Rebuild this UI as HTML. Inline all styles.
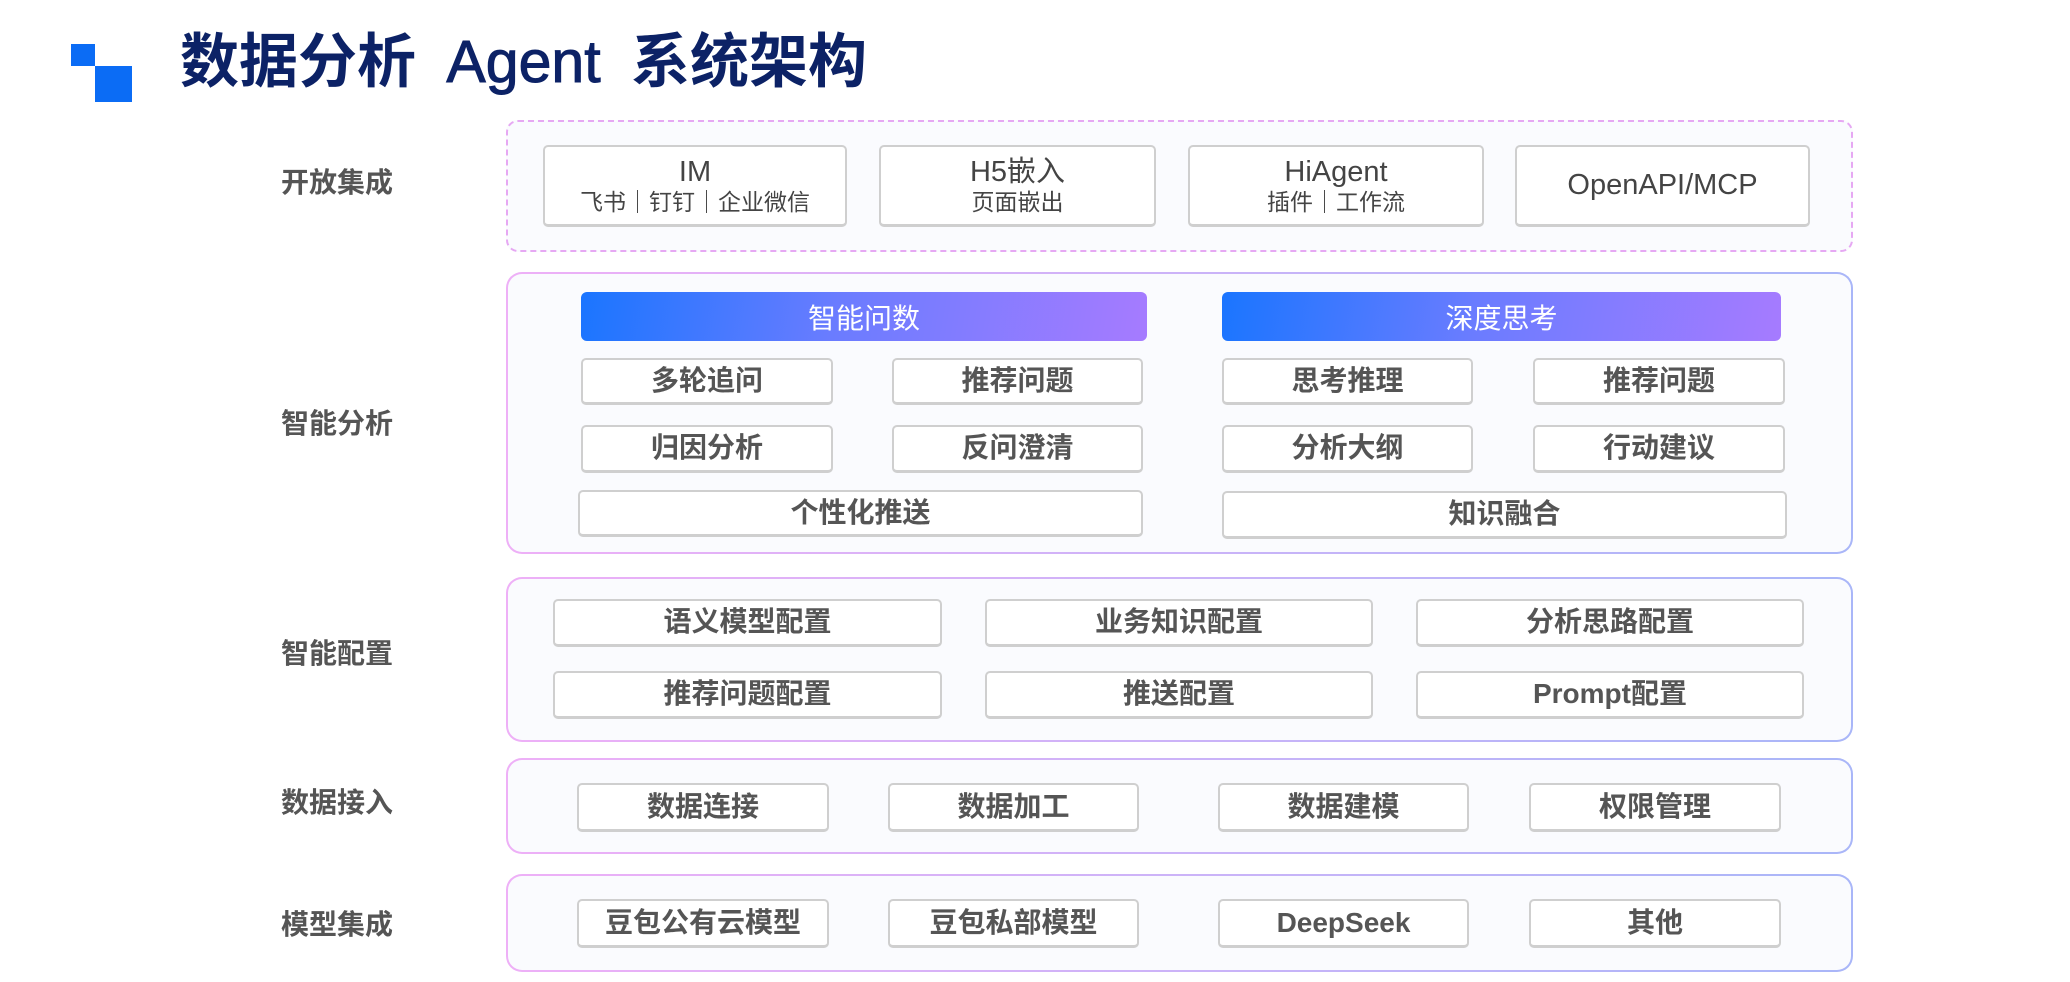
<!DOCTYPE html>
<html><head><meta charset="utf-8"><style>
*{margin:0;padding:0;box-sizing:border-box}
body{width:2070px;height:982px;background:#fff;position:relative;overflow:hidden;font-family:"Liberation Sans","Noto Sans CJK SC",sans-serif}
.a{position:absolute}
.sq1{left:71px;top:44px;width:24px;height:22px;background:#0b6cf5}
.sq2{left:95px;top:66px;width:37px;height:36px;background:#0b6cf5}
.title{left:180px;top:14px;font-size:59px;font-weight:bold;color:#0c2266;white-space:nowrap;word-spacing:14px}
.title span{font-weight:normal;-webkit-text-stroke:1px #0c2266}
.lbl{left:281px;font-size:28px;font-weight:bold;color:#555;transform:translateY(-50%)}
.box{border-radius:16px;background:#fafbfe;padding:2px;background:linear-gradient(90deg,#eeb0f7,#a9b6f8);}
.box>div{width:100%;height:100%;background:#fafbfe;border-radius:14px}
.dash{border:2px dashed #e6a8f3;border-radius:12px;background:#fafbfe}
.c{background:#fff;border:2px solid #cfcfcf;border-bottom-width:3px;border-radius:5px;display:flex;align-items:center;justify-content:center;font-size:28px;font-weight:bold;color:#555;flex-direction:column;line-height:1.15}
.c .s{font-size:23px;font-weight:normal;color:#444}
.c .t{font-weight:normal;color:#444;font-size:29px}
.g{border-radius:6px;background:linear-gradient(100deg,#1a75ff,#6a7cff 45%,#a67bff);color:#fff;font-size:28px;display:flex;align-items:center;justify-content:center}
</style></head><body>
<div class="a sq1"></div><div class="a sq2"></div>
<div class="a title">数据分析 <span>Agent</span> 系统架构</div>

<div class="a lbl" style="top:181px">开放集成</div>
<div class="a lbl" style="top:422px">智能分析</div>
<div class="a lbl" style="top:652px">智能配置</div>
<div class="a lbl" style="top:801px">数据接入</div>
<div class="a lbl" style="top:923px">模型集成</div>

<div class="a dash" style="left:506px;top:120px;width:1347px;height:132px"></div>
<div class="a c" style="left:543px;top:145px;width:304px;height:82px"><span class="t">IM</span><span class="s">飞书｜钉钉｜企业微信</span></div>
<div class="a c" style="left:879px;top:145px;width:277px;height:82px"><span class="t">H5嵌入</span><span class="s">页面嵌出</span></div>
<div class="a c" style="left:1188px;top:145px;width:296px;height:82px"><span class="t">HiAgent</span><span class="s">插件｜工作流</span></div>
<div class="a c" style="left:1515px;top:145px;width:295px;height:82px"><span class="t">OpenAPI/MCP</span></div>

<div class="a box" style="left:506px;top:272px;width:1347px;height:282px"><div></div></div>
<div class="a g" style="left:581px;top:292px;width:566px;height:49px">智能问数</div>
<div class="a g" style="left:1222px;top:292px;width:559px;height:49px">深度思考</div>
<div class="a c" style="left:581px;top:358px;width:252px;height:47px">多轮追问</div>
<div class="a c" style="left:892px;top:358px;width:251px;height:47px">推荐问题</div>
<div class="a c" style="left:1222px;top:358px;width:251px;height:47px">思考推理</div>
<div class="a c" style="left:1533px;top:358px;width:252px;height:47px">推荐问题</div>
<div class="a c" style="left:581px;top:425px;width:252px;height:48px">归因分析</div>
<div class="a c" style="left:892px;top:425px;width:251px;height:48px">反问澄清</div>
<div class="a c" style="left:1222px;top:425px;width:251px;height:48px">分析大纲</div>
<div class="a c" style="left:1533px;top:425px;width:252px;height:48px">行动建议</div>
<div class="a c" style="left:578px;top:490px;width:565px;height:47px">个性化推送</div>
<div class="a c" style="left:1222px;top:491px;width:565px;height:48px">知识融合</div>

<div class="a box" style="left:506px;top:577px;width:1347px;height:165px"><div></div></div>
<div class="a c" style="left:553px;top:599px;width:389px;height:48px">语义模型配置</div>
<div class="a c" style="left:985px;top:599px;width:388px;height:48px">业务知识配置</div>
<div class="a c" style="left:1416px;top:599px;width:388px;height:48px">分析思路配置</div>
<div class="a c" style="left:553px;top:671px;width:389px;height:48px">推荐问题配置</div>
<div class="a c" style="left:985px;top:671px;width:388px;height:48px">推送配置</div>
<div class="a c" style="left:1416px;top:671px;width:388px;height:48px">Prompt配置</div>

<div class="a box" style="left:506px;top:758px;width:1347px;height:96px"><div></div></div>
<div class="a c" style="left:577px;top:783px;width:252px;height:49px">数据连接</div>
<div class="a c" style="left:888px;top:783px;width:251px;height:49px">数据加工</div>
<div class="a c" style="left:1218px;top:783px;width:251px;height:49px">数据建模</div>
<div class="a c" style="left:1529px;top:783px;width:252px;height:49px">权限管理</div>

<div class="a box" style="left:506px;top:874px;width:1347px;height:98px"><div></div></div>
<div class="a c" style="left:577px;top:899px;width:252px;height:49px">豆包公有云模型</div>
<div class="a c" style="left:888px;top:899px;width:251px;height:49px">豆包私部模型</div>
<div class="a c" style="left:1218px;top:899px;width:251px;height:49px">DeepSeek</div>
<div class="a c" style="left:1529px;top:899px;width:252px;height:49px">其他</div>
</body></html>
